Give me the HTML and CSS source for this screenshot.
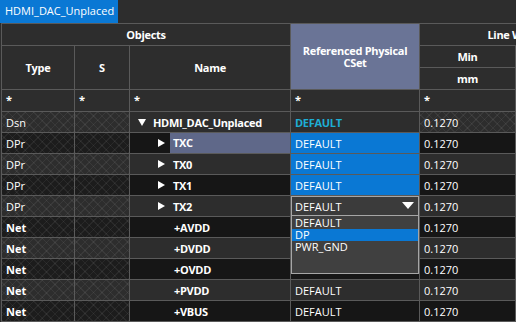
FILE: index.html
```html
<!DOCTYPE html>
<html lang="en">
<head>
    <meta charset="UTF-8">
    <title>Constraint Manager - HDMI_DAC_Unplaced</title>
    <link rel="stylesheet" href="styles.css">
</head>
<body>
    <div class="tab-bar">
        <div class="tab">HDMI_DAC_Unplaced</div>
    </div>

    <div class="sheet">
        <!-- header -->
        <div class="cell head objects">Objects</div>
        <div class="cell head cset">Referenced Physical<br>CSet</div>
        <div class="cell head linew">Line Width</div>
        <div class="cell head c-type">Type</div>
        <div class="cell head c-s">S</div>
        <div class="cell head c-name">Name</div>
        <div class="cell head">Min</div>
        <div class="cell head">Max</div>
        <div class="cell head">mm</div>
        <div class="cell head">mm</div>

        <!-- filter row -->
        <div class="cell filter">*</div>
        <div class="cell filter">*</div>
        <div class="cell filter">*</div>
        <div class="cell filter">*</div>
        <div class="cell filter">*</div>
        <div class="cell filter">*</div>

        <!-- data rows -->
        <div class="row">
            <div class="cell ro">Dsn</div>
            <div class="cell ro"></div>
            <div class="cell name lvl0"><span class="twisty down"></span><b>HDMI_DAC_Unplaced</b></div>
            <div class="cell dsn-cset">DEFAULT</div>
            <div class="cell ro">0.1270</div>
            <div class="cell ro">0.1270</div>
        </div>
        <div class="row dark">
            <div class="cell ro">DPr</div>
            <div class="cell ro"></div>
            <div class="cell name lvl1"><span class="twisty right"></span><b class="picked">TXC</b></div>
            <div class="cell sel">DEFAULT</div>
            <div class="cell">0.1270</div>
            <div class="cell">0.1270</div>
        </div>
        <div class="row">
            <div class="cell ro">DPr</div>
            <div class="cell ro"></div>
            <div class="cell name lvl1"><span class="twisty right"></span><b>TX0</b></div>
            <div class="cell sel">DEFAULT</div>
            <div class="cell">0.1270</div>
            <div class="cell">0.1270</div>
        </div>
        <div class="row dark">
            <div class="cell ro">DPr</div>
            <div class="cell ro"></div>
            <div class="cell name lvl1"><span class="twisty right"></span><b>TX1</b></div>
            <div class="cell sel">DEFAULT</div>
            <div class="cell">0.1270</div>
            <div class="cell">0.1270</div>
        </div>
        <div class="row">
            <div class="cell ro">DPr</div>
            <div class="cell ro"></div>
            <div class="cell name lvl1"><span class="twisty right"></span><b>TX2</b></div>
            <div class="cell combo">
                DEFAULT
                <span class="combo-arrow"></span>
                <ul class="combo-list">
                    <li>DEFAULT</li>
                    <li class="active">DP</li>
                    <li>PWR_GND</li>
                </ul>
            </div>
            <div class="cell">0.1270</div>
            <div class="cell">0.1270</div>
        </div>
        <!-- csets of the next three nets sit under the open list -->
        <div class="row dark">
            <div class="cell ro net">Net</div>
            <div class="cell ro"></div>
            <div class="cell name net-name"><b>+AVDD</b></div>
            <div class="cell"></div>
            <div class="cell">0.1270</div>
            <div class="cell">0.1270</div>
        </div>
        <div class="row">
            <div class="cell ro net">Net</div>
            <div class="cell ro"></div>
            <div class="cell name net-name"><b>+DVDD</b></div>
            <div class="cell"></div>
            <div class="cell">0.1270</div>
            <div class="cell">0.1270</div>
        </div>
        <div class="row dark">
            <div class="cell ro net">Net</div>
            <div class="cell ro"></div>
            <div class="cell name net-name"><b>+OVDD</b></div>
            <div class="cell"></div>
            <div class="cell">0.1270</div>
            <div class="cell">0.1270</div>
        </div>
        <div class="row">
            <div class="cell ro net">Net</div>
            <div class="cell ro"></div>
            <div class="cell name net-name"><b>+PVDD</b></div>
            <div class="cell">DEFAULT</div>
            <div class="cell">0.1270</div>
            <div class="cell">0.1270</div>
        </div>
        <div class="row dark">
            <div class="cell ro net">Net</div>
            <div class="cell ro"></div>
            <div class="cell name net-name"><b>+VBUS</b></div>
            <div class="cell">DEFAULT</div>
            <div class="cell">0.1270</div>
            <div class="cell">0.1270</div>
        </div>
    </div>
</body>
</html>
```

FILE: styles.css
```css
body {
    margin: 0;
    width: 516px;
    height: 322px;
    overflow: hidden;
    background-color: #2d2d2d;
    font-family: "Open Sans", "Noto Sans", sans-serif;
    font-size: 11px;
    color: #fff;
}
b {
    letter-spacing: -0.3px;
}
.tab-bar {
    height: 23px;
    display: flex;
}
.tab {
    background-color: #0a78d4;
    color: #fff;
    padding: 0 4px 0 5px;
    line-height: 22px;
    height: 23px;
    font-size: 11px;
}
.sheet {
    display: grid;
    grid-template-columns: 72px 54px 160px 128px 95px 95px;
    grid-template-rows: 21px 21px 21px 21px;
    grid-auto-rows: 20px;
    gap: 1px;
    padding: 1px;
    margin-left: 1px;
    width: max-content;
    background-color: #5a5a5a;
}
.row {
    display: contents;
}
.cell {
    position: relative;
    background-color: #2d2d2d;
    padding: 1px 0 0 4px;
    line-height: 19px;
    white-space: nowrap;
    overflow: hidden;
}
.row.dark .cell {
    background-color: #161616;
}
.head {
    display: flex;
    align-items: center;
    justify-content: center;
    padding: 0;
    font-weight: bold;
    letter-spacing: -0.3px;
    line-height: 12px;
    text-align: center;
}
.objects {
    grid-column: 1 / 4;
    grid-row: 1;
}
.cset {
    grid-column: 4;
    grid-row: 1 / 4;
    background-color: #6a7496;
}
.linew {
    grid-column: 5 / 7;
    grid-row: 1;
}
.c-type { grid-column: 1; grid-row: 2 / 4; }
.c-s { grid-column: 2; grid-row: 2 / 4; }
.c-name { grid-column: 3; grid-row: 2 / 4; }
.filter {
    font-weight: bold;
    line-height: 17px;
}

/* read-only cells get the crosshatch */
.cell.ro,
.row.dark .cell.ro {
    background-image:
        repeating-linear-gradient(45deg, rgba(255,255,255,0.06) 0 1px, transparent 1px 6px),
        repeating-linear-gradient(-45deg, rgba(255,255,255,0.06) 0 1px, transparent 1px 6px);
}
.row.dark .cell.ro {
    background-color: #1c1c1c;
}
.net {
    font-weight: bold;
}

.name {
    display: flex;
    align-items: center;
    padding: 0;
}
.lvl0 {
    padding-left: 8px;
}
.lvl1 {
    padding-left: 28px;
}
.net-name {
    padding-left: 44px;
}
.twisty {
    width: 0;
    height: 0;
    margin-right: 7px;
}
.twisty.down {
    border-left: 4.5px solid transparent;
    border-right: 4.5px solid transparent;
    border-top: 7px solid #fff;
}
.twisty.right {
    border-top: 4.5px solid transparent;
    border-bottom: 4.5px solid transparent;
    border-left: 7px solid #fff;
    margin-right: 8px;
}
.row .picked {
    align-self: stretch;
    flex: 1;
    margin-left: -3px;
    padding-left: 3px;
    line-height: 20px;
    background-color: #5f6889;
}

.dsn-cset {
    color: #1eaed4;
    font-weight: bold;
    letter-spacing: -0.3px;
}
.row .sel,
.row.dark .sel {
    background-color: #0a78d4;
}
.row .combo {
    overflow: visible;
    background-color: #3b3b3b;
    box-shadow: inset 0 0 0 1px #a6a6a6;
    z-index: 2;
}
.combo-arrow {
    position: absolute;
    right: 5px;
    top: 6px;
    width: 0;
    height: 0;
    border-left: 6px solid transparent;
    border-right: 6px solid transparent;
    border-top: 7px solid #fff;
}
.combo-list {
    position: absolute;
    left: 0;
    top: 20px;
    width: 126px;
    height: 56px;
    margin: 0;
    padding: 1px 0 0;
    list-style: none;
    background-color: #404040;
    border: 1px solid #a6a6a6;
    border-top: none;
    line-height: 12px;
}
.combo-list li {
    padding-left: 3px;
}
.combo-list li.active {
    background-color: #0a78d4;
}
```
